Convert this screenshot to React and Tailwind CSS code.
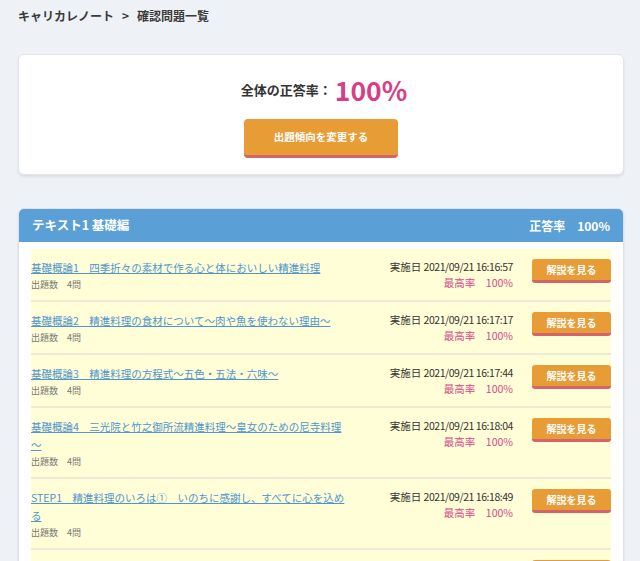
const rows = [
  { title: "基礎概論1　四季折々の素材で作る心と体においしい精進料理", date: "2021/09/21 16:16:57" },
  { title: "基礎概論2　精進料理の食材について～肉や魚を使わない理由～", date: "2021/09/21 16:17:17" },
  { title: "基礎概論3　精進料理の方程式～五色・五法・六味～", date: "2021/09/21 16:17:44" },
  { title: "基礎概論4　三光院と竹之御所流精進料理～皇女のための尼寺料理～", date: "2021/09/21 16:18:04" },
  { title: "STEP1　精進料理のいろは①　いのちに感謝し、すべてに心を込める", date: "2021/09/21 16:18:49" },
  { title: "STEP2　精進料理のいろは②　季節を感じる", date: "2021/09/21 16:19:12" },
];

const App = () => {
  return (
    <div
      className="min-h-screen bg-[#eef1f6] pl-[18px] pr-[16px] pt-[6px] pb-10 text-[#333]"
      style={{ fontFamily: '"Noto Sans CJK JP", "Noto Sans", sans-serif' }}
    >
      {/* パンくず */}
      <div className="text-[12px] font-bold leading-[20px] text-[#3a3a3a]">
        キャリカレノート<span className="mx-[8px]">&gt;</span>確認問題一覧
      </div>

      {/* 全体の正答率 */}
      <div className="mt-[28px] flex flex-col items-center rounded-md border border-[#e1e4ea] bg-white pt-[18px] pb-[16px] shadow-[0_2px_3px_rgba(0,0,0,0.08)]">
        <div className="ml-[6px] flex items-center leading-[34px]">
          <span className="text-[13px] font-bold text-[#333]">全体の正答率：</span>
          <span className="ml-[3px] text-[26.5px] font-bold text-[#d63f87]">100%</span>
        </div>
        <button className="mt-[12px] h-[39px] w-[154px] rounded-[4px] border-b-[3px] border-[#d4646b] bg-[#e89c36] text-[10.5px] font-bold text-white">
          出題傾向を変更する
        </button>
      </div>

      {/* テキスト1 */}
      <div className="mt-[33px] overflow-hidden rounded-md border border-[#dde1e8] bg-white shadow-[0_2px_3px_rgba(0,0,0,0.08)]">
        <div className="flex h-[33px] items-center justify-between bg-[#5a9fd6] px-[13px] font-bold text-white">
          <span className="text-[12.5px]">テキスト1 基礎編</span>
          <span className="text-[12px]">正答率　100%</span>
        </div>
        <div className="px-[12px] pt-[7px]">
          <ul className="bg-[#fffed6]">
            {rows.map((r, i) => (
              <li key={i} className="flex items-start border-b-2 border-[#ecebd8] pt-[10px] pb-[8px]">
                <div className="w-[316px] text-[10.5px] leading-[18px]">
                  <a href="#" className="text-[#4f95cf] underline">
                    {r.title}
                  </a>
                  <div className="text-[9px] leading-[15px] text-[#777]">出題数　4問</div>
                </div>
                <div className="flex-1 text-right text-[10.5px] leading-[16px]">
                  <div className="text-[#333]">
                    実施日 <span className="tracking-[-0.45px]">{r.date}</span>
                  </div>
                  <div className="text-[#d6478a]">最高率　100%</div>
                </div>
                <button className="ml-[19px] h-[24px] w-[79px] rounded-[3px] border-b-[3px] border-[#d4646b] bg-[#e89c36] text-[10px] font-bold leading-[16px] text-white">
                  解説を見る
                </button>
              </li>
            ))}
          </ul>
        </div>
      </div>
    </div>
  );
};

export default App;
